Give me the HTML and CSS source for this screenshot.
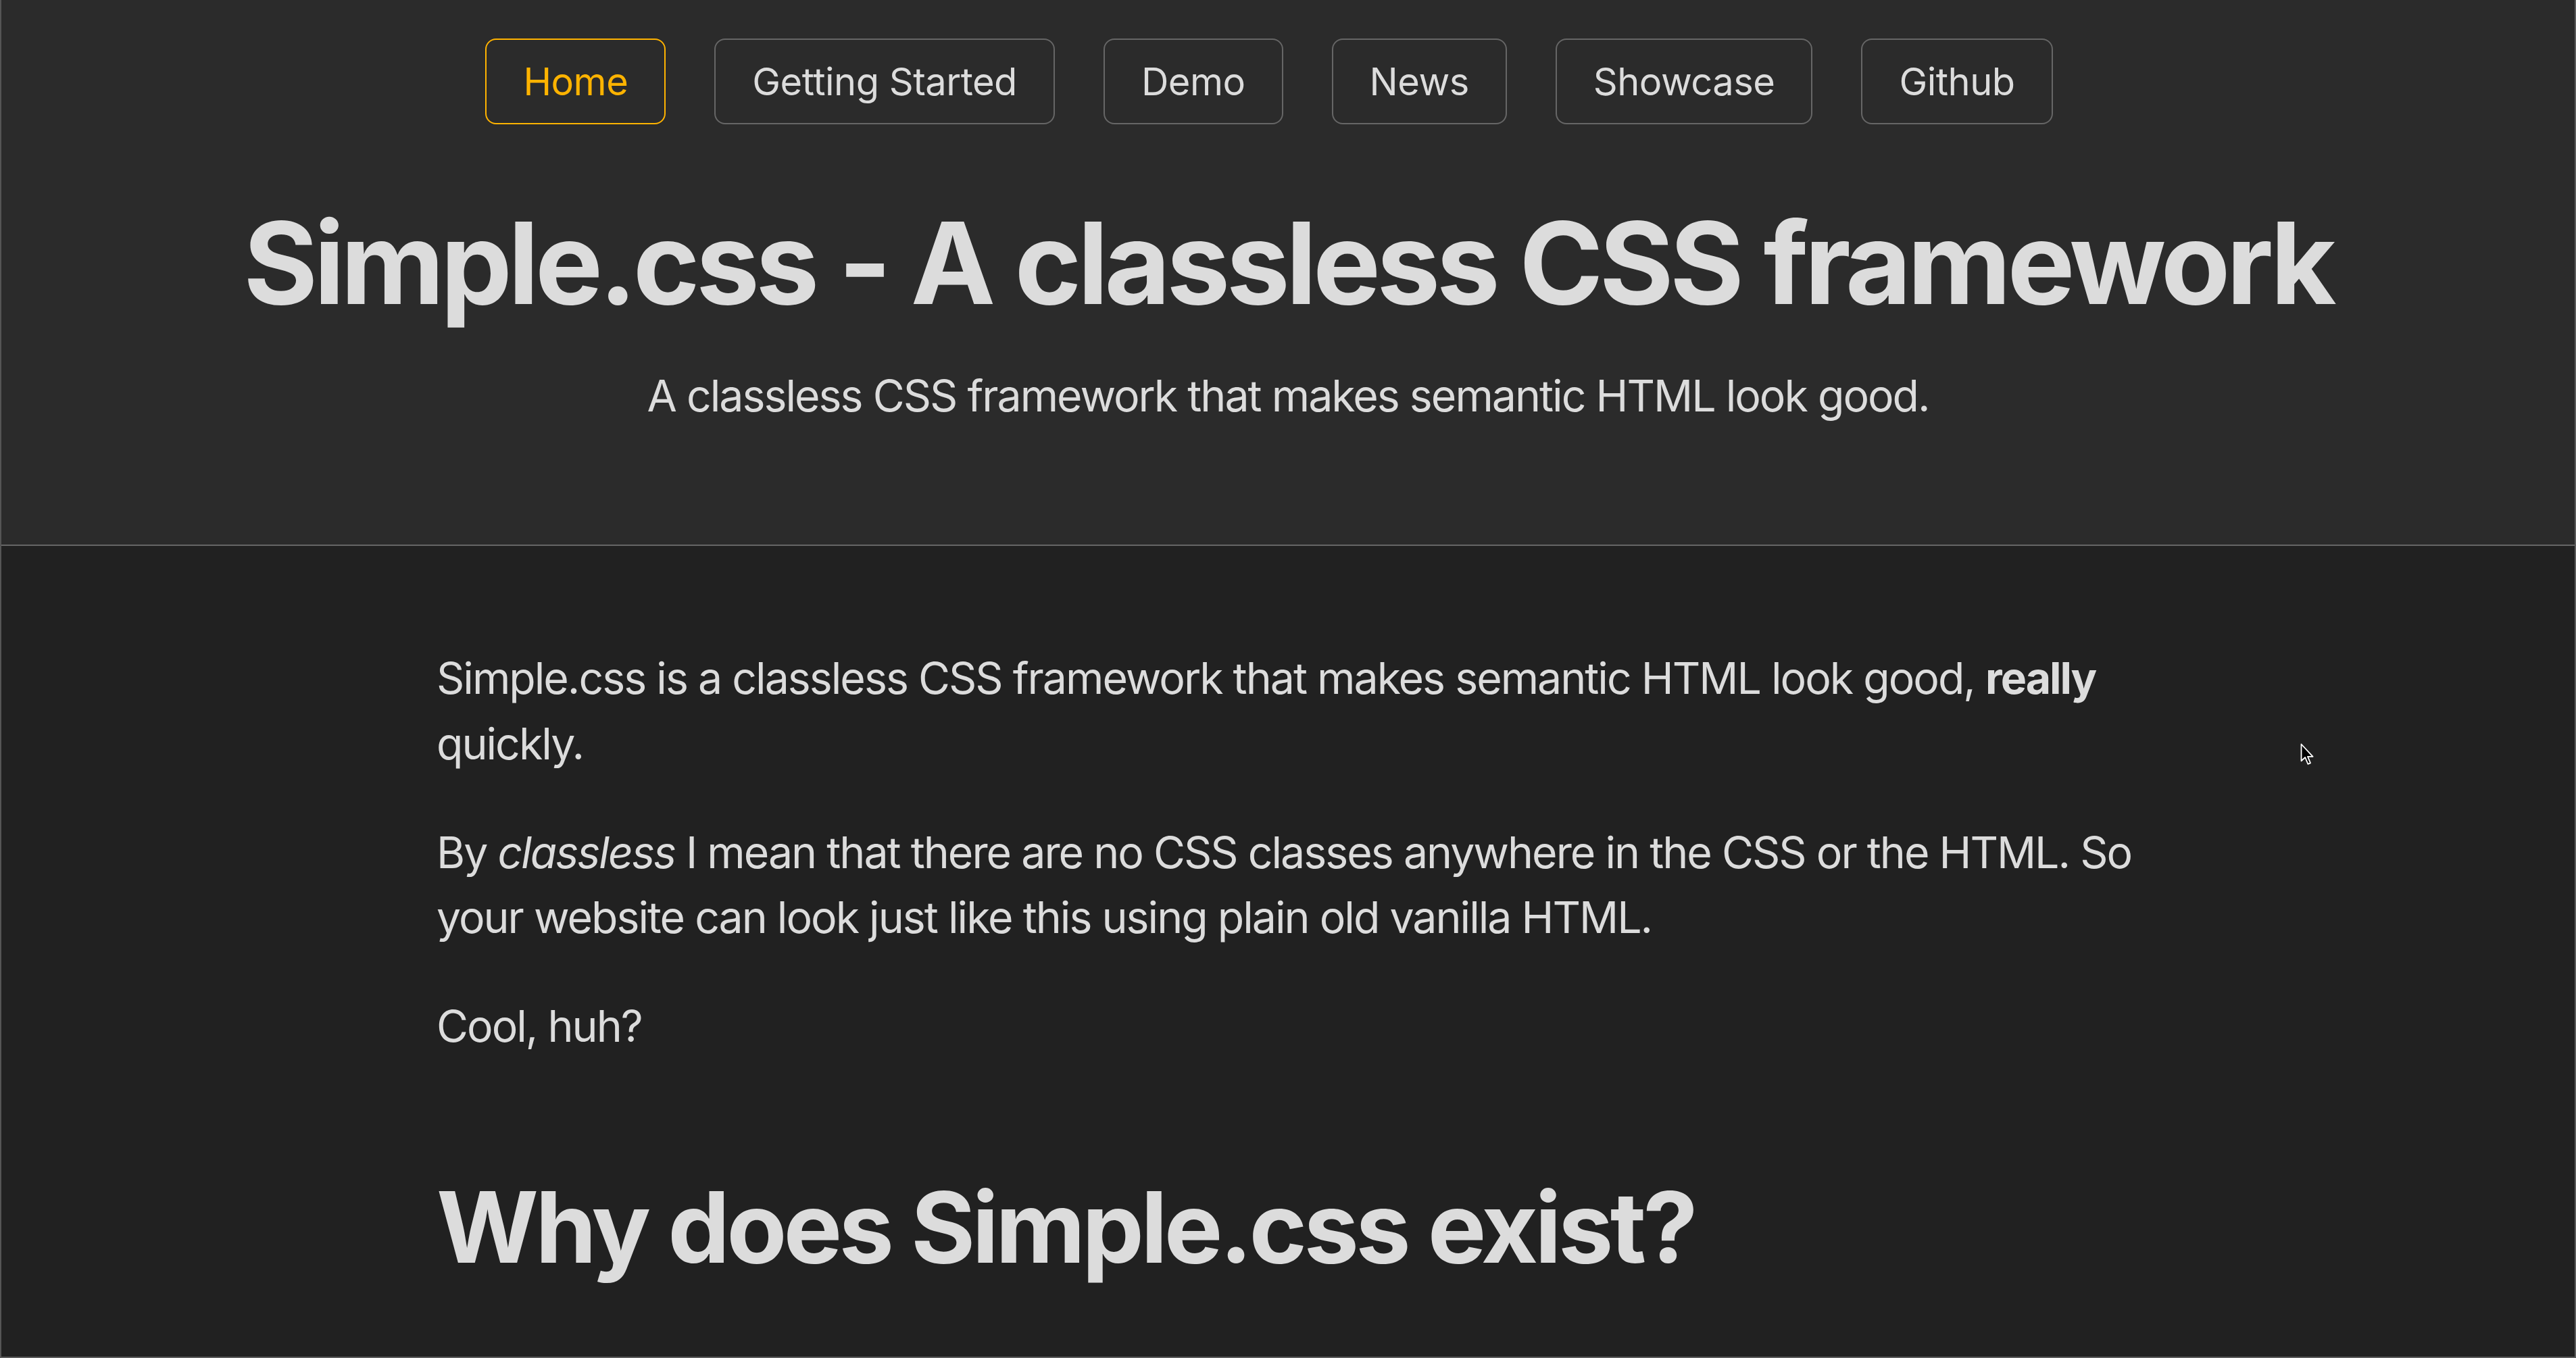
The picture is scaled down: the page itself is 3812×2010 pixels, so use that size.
FILE: index.html
```html
<!DOCTYPE html>
<html lang="en">
<head>
<meta charset="utf-8">
<title>Simple.css - A classless CSS framework</title>
<link rel="stylesheet" href="styles.css">
</head>
<body>
<div class="window">
  <header class="site-header">
    <nav class="site-nav">
      <a class="nav-link current" href="#">Home</a>
      <a class="nav-link" href="#">Getting Started</a>
      <a class="nav-link" href="#">Demo</a>
      <a class="nav-link" href="#">News</a>
      <a class="nav-link" href="#">Showcase</a>
      <a class="nav-link" href="#">Github</a>
    </nav>
    <h1 class="site-title">Simple.css - A classless CSS framework</h1>
    <p class="site-tagline">A classless CSS framework that makes semantic HTML look good.</p>
  </header>
  <main class="content">
    <p class="para">Simple.css is a classless CSS framework that makes semantic HTML look good, <strong>really</strong> quickly.</p>
    <p class="para">By <em>classless</em> I mean that there are no CSS classes anywhere in the CSS or the HTML. So your website can look just like this using plain old vanilla HTML.</p>
    <p class="para">Cool, huh?</p>
    <h2 class="section-title">Why does Simple.css exist?</h2>
  </main>
  <svg class="cursor" width="24" height="36" viewBox="0 0 16 24" aria-hidden="true">
    <path d="M1 1 L1 17.5 L4.8 14 L7.6 20.6 L10 19.6 L7.3 13.2 L12.4 13.2 Z" fill="#000" stroke="#fff" stroke-width="1.2" stroke-linejoin="round"/>
  </svg>
</div>
</body>
</html>
```
FILE: styles.css
```css
html, body {
  margin: 0;
  padding: 0;
  background: #212121;
}

body {
  font-family: Inter, "Noto Sans", "Liberation Sans", sans-serif;
  color: #dcdcdc;
  font-size: 64.4px;
  line-height: 1.5;
  letter-spacing: -2px;
}

.window {
  position: relative;
  height: 100vh;
  box-sizing: border-box;
  border-left: 2px solid #555;
  border-right: 2px solid #5c5c5c;
  border-bottom: 2px solid #5c5c5c;
  overflow: hidden;
  display: flex;
  flex-direction: column;
}

.site-header {
  background: #2b2b2b;
  border-bottom: 2px solid #666;
  text-align: center;
  padding: 0 28px 115.5px;
}

.site-nav {
  display: flex;
  justify-content: center;
  gap: 16px;
  padding-top: 57px;
  font-size: 56px;
  line-height: 2;
  letter-spacing: -0.5px;
}

.nav-link {
  display: block;
  margin-right: 56px;
  padding: 5.6px 54px;
  border: 2px solid #666;
  border-radius: 16px;
  color: #dcdcdc;
  text-decoration: none;
}

.nav-link.current {
  border-color: #ffb300;
  color: #ffb300;
}

.site-title {
  font-size: 168px;
  line-height: 1.1;
  font-weight: 700;
  margin: 113px auto 56px;
  letter-spacing: -5.7px;
}

.site-tagline {
  margin: 0 auto 56px;
}

.content {
  width: 2520px;
  margin: 0 auto;
  padding-top: 148px;
}

.para {
  margin: 0 0 64.4px;
}

.section-title {
  font-size: 145.6px;
  line-height: 1.1;
  font-weight: 700;
  margin: 168px 0 0;
  letter-spacing: -4.8px;
}

.cursor {
  position: absolute;
  left: 3402px;
  top: 1100px;
}
```
